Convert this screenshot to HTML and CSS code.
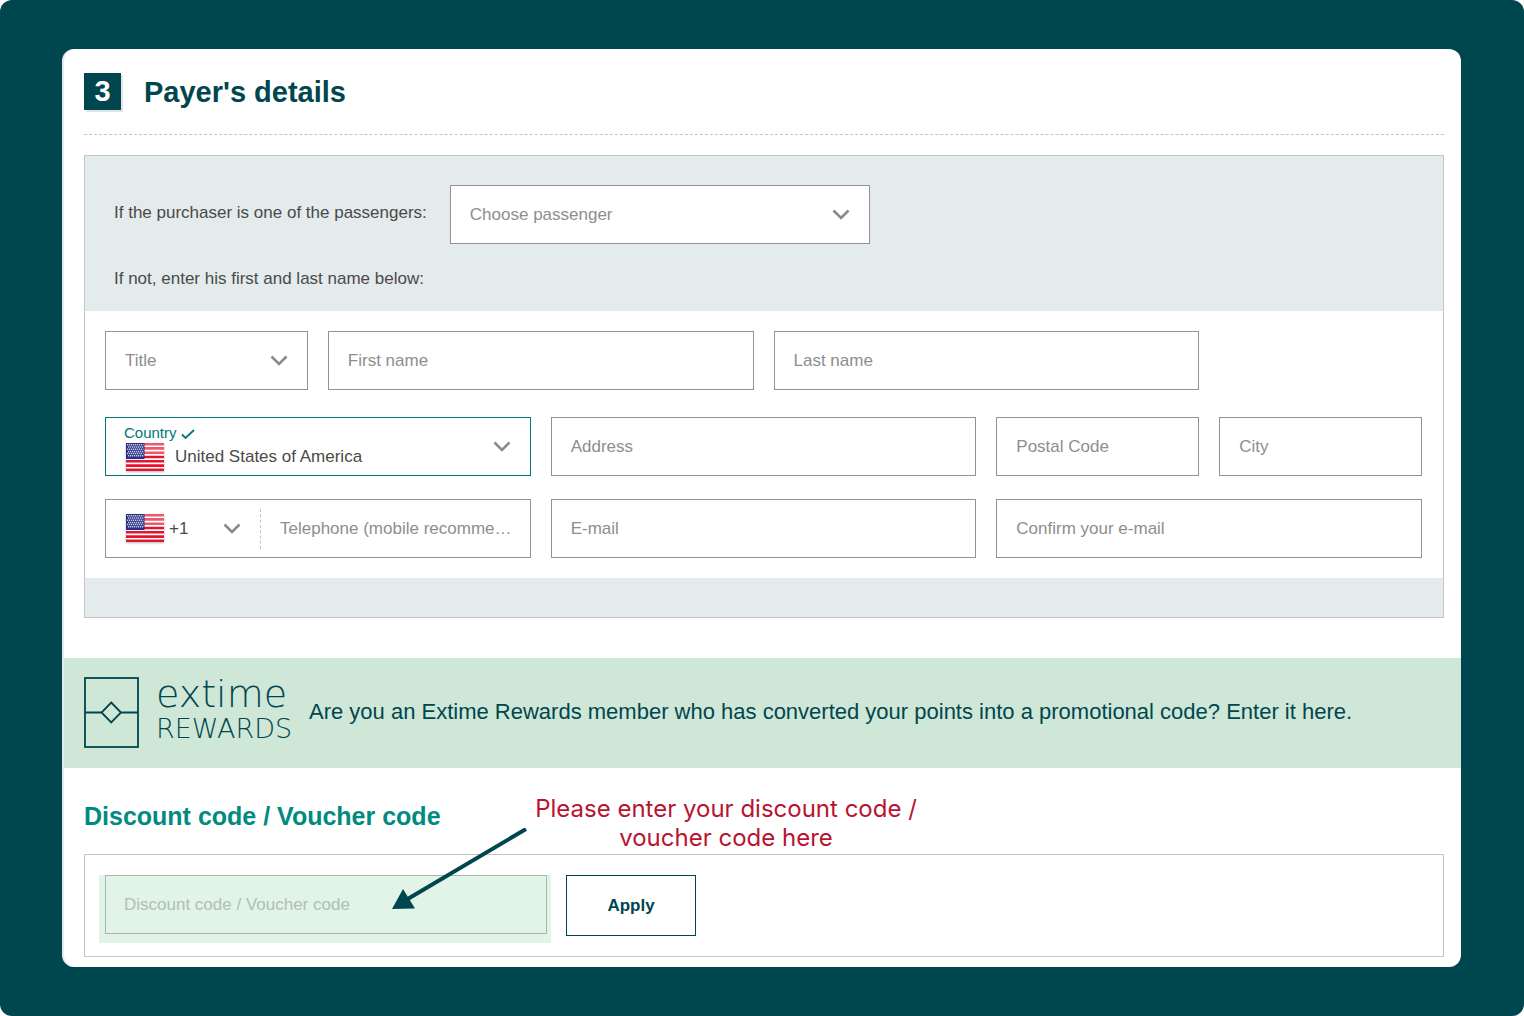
FILE: index.html
```html
<!DOCTYPE html>
<html lang="en">
<head>
    <meta charset="UTF-8">
    <meta name="viewport" content="width=device-width, initial-scale=1.0">
    <title>Payer's details</title>
    <link rel="stylesheet" href="styles.css">
</head>
<body>
    <!-- shared icons -->
    <svg class="sprite" aria-hidden="true">
        <symbol id="chevron" viewBox="0 0 18 11">
            <path d="M1.5 1.5 L9 9 L16.5 1.5" fill="none" stroke="#8a8a8e" stroke-width="2.6"/>
        </symbol>
        <symbol id="flag-us" viewBox="0 0 38 28">
            <rect width="38" height="28" fill="#fff"/>
            <path d="M0 1.1H38M0 5.4H38M0 9.7H38M0 14H38M0 18.3H38M0 22.6H38M0 26.9H38" stroke="#e3142d" stroke-width="2.6"/>
            <path d="M18 0H38V12H18Z" fill="#fff" opacity="0.3"/>
            <rect width="18.5" height="16" fill="#2b2f86"/>
            <path d="M1 1.8H17.5M2 4H17.5M1 6.2H17.5M2 8.4H17.5M1 10.6H17.5M2 12.8H17.5" stroke="#c3c6e4" stroke-width="1.5" stroke-dasharray="1.3 0.7"/>
        </symbol>
    </svg>

    <main class="card">
        <header class="step">
            <span class="step-number">3</span>
            <h1>Payer's details</h1>
        </header>

        <form class="panel">
            <div class="panel-top">
                <div class="passenger">
                    <label for="passenger">If the purchaser is one of the passengers:</label>
                    <div class="field passenger-field">
                        <select id="passenger">
                            <option>Choose passenger</option>
                        </select>
                        <svg class="chevron"><use href="#chevron"/></svg>
                    </div>
                </div>
                <p>If not, enter his first and last name below:</p>
            </div>

            <div class="panel-fields">
                <div class="row">
                    <div class="field">
                        <select aria-label="Title">
                            <option>Title</option>
                        </select>
                        <svg class="chevron"><use href="#chevron"/></svg>
                    </div>
                    <div class="field wide"><input type="text" placeholder="First name" aria-label="First name"></div>
                    <div class="field wide"><input type="text" placeholder="Last name" aria-label="Last name"></div>
                </div>
                <div class="row row-address">
                    <div class="field wide country">
                        <label for="country">Country
                            <svg class="tick" viewBox="0 0 14 10"><path d="M1 5.5 L4.5 9 L13 1" fill="none" stroke="currentColor" stroke-width="1.8"/></svg>
                        </label>
                        <svg class="flag"><use href="#flag-us"/></svg>
                        <select id="country">
                            <option>United States of America</option>
                        </select>
                        <svg class="chevron"><use href="#chevron"/></svg>
                    </div>
                    <div class="field wide"><input type="text" placeholder="Address" aria-label="Address"></div>
                    <div class="field"><input type="text" placeholder="Postal Code" aria-label="Postal Code"></div>
                    <div class="field"><input type="text" placeholder="City" aria-label="City"></div>
                </div>
                <div class="row">
                    <div class="field wide phone">
                        <div class="phone-code">
                            <svg class="flag"><use href="#flag-us"/></svg>
                            <select aria-label="Country code">
                                <option>+1</option>
                            </select>
                            <svg class="chevron"><use href="#chevron"/></svg>
                        </div>
                        <input type="tel" placeholder="Telephone (mobile recommended)" aria-label="Telephone">
                    </div>
                    <div class="field wide"><input type="email" placeholder="E-mail" aria-label="E-mail"></div>
                    <div class="field wide"><input type="email" placeholder="Confirm your e-mail" aria-label="Confirm your e-mail"></div>
                </div>
            </div>

            <div class="panel-bottom"></div>
        </form>

        <section class="rewards">
            <svg class="rewards-icon" viewBox="0 0 55 71" fill="none" stroke="#00464f" stroke-width="1.8">
                <rect x="1" y="1" width="53" height="69"/>
                <path d="M1 35.5H17.5M37 35.5H54M27.2 25.5L37 35.5L27.2 45.5L17.5 35.5Z"/>
            </svg>
            <div class="rewards-name">
                <span class="extime">extime</span>
                <span class="rewards-word">REWARDS</span>
            </div>
            <p>Are you an Extime Rewards member who has converted your points into a promotional code? Enter it here.</p>
        </section>

        <section class="discount">
            <h2><label for="code">Discount code / Voucher code</label></h2>
            <form class="discount-box">
                <div class="highlight">
                    <input type="text" id="code" placeholder="Discount code / Voucher code">
                </div>
                <button type="button">Apply</button>
            </form>
            <p class="hint">Please enter your discount code / voucher code here</p>
            <svg class="arrow" viewBox="0 0 136 82">
                <path d="M134 1L14 72" stroke="#00464f" stroke-width="4"/>
                <path d="M0 81L11 61L23 80.5Z" fill="#00464f"/>
            </svg>
        </section>
    </main>
</body>
</html>
```
FILE: styles.css
```css
* {
    box-sizing: border-box;
}

html {
    background-color: #ffffff;
}

body {
    margin: 0;
    padding: 49px 63px 49px 62px;
    min-height: 100vh;
    background-color: #00464f;
    border-radius: 12px;
    font-family: "Liberation Sans", Arial, sans-serif;
    font-size: 17px;
    line-height: 20px;
    color: #4a4a4a;
}

h1, h2, p {
    margin: 0;
}

.sprite {
    position: absolute;
    width: 0;
    height: 0;
}

.card {
    background-color: #ffffff;
    border-left: 2px solid #e9e9ed;
    border-radius: 12px;
    overflow: hidden;
}

/* step heading */
.step {
    display: flex;
    align-items: center;
    gap: 23px;
    margin: 0 17px 20px 20px;
    padding: 24px 0;
    border-bottom: 1px dashed #c4c4c4;
}

.step-number {
    width: 37px;
    height: 37px;
    background-color: #00464f;
    box-shadow: 2px 2px 0 #e2e5e5;
    color: #ffffff;
    font-size: 29px;
    font-weight: bold;
    line-height: 37px;
    text-align: center;
}

h1 {
    font-size: 29px;
    line-height: 36px;
    color: #00464f;
}

/* payer panel */
.panel {
    margin: 0 17px 40px 20px;
    border: 1px solid #c3c5c5;
}

.panel-top {
    padding: 29px 29px 22px;
    background-color: #e3ebec;
}

.passenger {
    display: flex;
    align-items: center;
    gap: 23px;
    margin-bottom: 25px;
}

.passenger label {
    padding-bottom: 4px;
}

.passenger-field {
    width: 420px;
}

.panel-fields {
    padding: 20px 21px 20px 20px;
}

.panel-bottom {
    height: 39px;
    background-color: #e3ebec;
}

.row {
    display: grid;
    grid-template-columns: repeat(6, 1fr);
    gap: 20px;
}

.row-address {
    margin: 27px 0 23px;
}

.field {
    position: relative;
    height: 59px;
    border: 1px solid #929292;
    background-color: #ffffff;
}

.wide {
    grid-column: span 2;
}

input, select {
    display: block;
    width: 100%;
    height: 100%;
    margin: 0;
    padding: 0 16px 0 19px;
    border: none;
    border-radius: 0;
    background: transparent;
    font: inherit;
    color: #8e8e8e;
    appearance: none;
    text-overflow: ellipsis;
}

input::placeholder {
    color: #8e8e8e;
}

.chevron {
    position: absolute;
    top: 23px;
    right: 19px;
    width: 18px;
    height: 11px;
    pointer-events: none;
}

.flag {
    position: absolute;
    left: 20px;
    width: 38px;
    height: 28px;
    filter: drop-shadow(0 1px 1px #b5b5b5);
    pointer-events: none;
}

.field.country {
    border-color: #00777b;
}

.country label {
    position: absolute;
    top: 5px;
    left: 18px;
    font-size: 15px;
    color: #00777b;
}

.tick {
    width: 14px;
    height: 10px;
    vertical-align: -1px;
}

.country .flag {
    top: 25px;
}

.country select {
    padding: 20px 40px 0 69px;
    color: #4a4a4a;
}

.phone {
    display: flex;
    align-items: center;
}

.phone-code {
    position: relative;
    flex: none;
    width: 155px;
    height: 40px;
    border-right: 1px dashed #c4c4c4;
}

.phone-code .flag {
    top: 5px;
}

.phone-code .chevron {
    top: 14px;
}

.phone-code select {
    padding: 0 40px 0 63px;
    color: #4a4a4a;
}

/* rewards banner */
.rewards {
    display: flex;
    align-items: center;
    height: 110px;
    padding: 0 20px 2px;
    background-color: #cfe7d7;
    color: #00464f;
}

.rewards-icon {
    flex: none;
    width: 55px;
    height: 71px;
    margin-right: 17px;
}

.rewards-name {
    display: flex;
    flex-direction: column;
    flex: none;
    width: 136px;
    margin-right: 17px;
    padding-bottom: 2px;
    font-family: "DejaVu Sans Light", "DejaVu Sans", sans-serif;
    font-weight: 200;
}

.extime {
    font-size: 38px;
    line-height: 36px;
}

.rewards-word {
    font-size: 27px;
    line-height: 34px;
}

.rewards p {
    font-size: 22px;
    line-height: 26px;
}

/* discount code */
.discount {
    position: relative;
    padding: 33px 17px 10px 20px;
}

h2 {
    margin-bottom: 23px;
    font-size: 25px;
    line-height: 30px;
    color: #008a80;
}

.discount-box {
    display: flex;
    align-items: flex-start;
    gap: 15px;
    padding: 20px 14px 13px;
    border: 1px solid #c3c5c5;
}

.highlight {
    width: 452px;
    padding: 0 4px 9px 6px;
    background-color: #e2f4e7;
}

.highlight input {
    height: 59px;
    padding: 0 18px;
    border: 1px solid #a6b8ad;
}

.highlight input::placeholder {
    color: #afbfb5;
}

button {
    width: 130px;
    height: 61px;
    border: 1px solid #00464f;
    background-color: #ffffff;
    font: inherit;
    font-weight: bold;
    color: #00464f;
    cursor: pointer;
}

.hint {
    position: absolute;
    top: 26px;
    left: 462px;
    width: 400px;
    font-family: Inter, sans-serif;
    font-size: 24px;
    line-height: 29px;
    text-align: center;
    color: #b8142f;
}

.arrow {
    position: absolute;
    top: 60px;
    left: 328px;
    width: 136px;
    height: 82px;
    pointer-events: none;
}
```
